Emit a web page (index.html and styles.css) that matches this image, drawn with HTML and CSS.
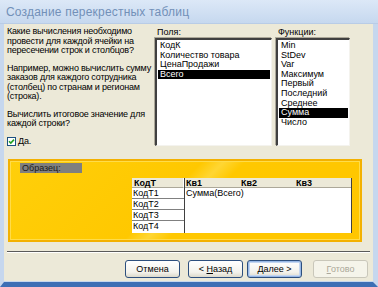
FILE: index.html
```html
<!DOCTYPE html>
<html lang="ru">
<head>
<meta charset="utf-8">
<title>Создание перекрестных таблиц</title>
<link rel="stylesheet" href="styles.css">
</head>
<body>
<div class="window">
  <div class="titlebar">Создание перекрестных таблиц</div>
  <div class="frame">
    <div class="top">
      <div class="intro">
        <p>Какие вычисления необходимо<br>провести для каждой ячейки на<br>пересечении строк и столбцов?</p>
        <p>Например, можно вычислить сумму<br>заказов для каждого сотрудника<br>(столбец) по странам и регионам<br>(строка).</p>
        <p>Вычислить итоговое значение для<br>каждой строки?</p>
        <label class="check">
          <span class="box"><svg width="9" height="9" viewBox="0 0 9 9"><path d="M2 4.2 L3.8 6 L7 2.6" fill="none" stroke="#21a121" stroke-width="1.6"/></svg></span>
          <span><u>Д</u>а.</span>
        </label>
      </div>
      <div class="col fields">
        <div class="lbl">Поля:</div>
        <ul class="list">
          <li>КодК</li>
          <li>Количество товара</li>
          <li>ЦенаПродажи</li>
          <li class="sel">Всего</li>
        </ul>
      </div>
      <div class="col funcs">
        <div class="lbl">Функции:</div>
        <ul class="list">
          <li>Min</li>
          <li>StDev</li>
          <li>Var</li>
          <li>Максимум</li>
          <li>Первый</li>
          <li>Последний</li>
          <li>Среднее</li>
          <li class="sel">Сумма</li>
          <li>Число</li>
        </ul>
      </div>
    </div>

    <div class="sample">
      <div class="sample-label">Образец:</div>
      <div class="grid">
        <div class="rowhead">
          <div class="hcell">КодТ</div>
          <div class="rcell">КодТ1</div>
          <div class="rcell">КодТ2</div>
          <div class="rcell">КодТ3</div>
          <div class="rcell">КодТ4</div>
        </div>
        <div class="data">
          <div class="hrow"><span>Кв1</span><span>Кв2</span><span>Кв3</span></div>
          <div class="val">Сумма(Всего)</div>
        </div>
      </div>
    </div>

    <div class="sep"></div>

    <div class="buttons">
      <button class="btn">Отмена</button>
      <button class="btn back">&lt; <u>Н</u>азад</button>
      <button class="btn next"><u>Д</u>алее &gt;</button>
      <button class="btn off"><u>Г</u>отово</button>
    </div>
  </div>
</div>
</body>
</html>
```
FILE: styles.css
```css
* { box-sizing: border-box; }
html, body { margin: 0; padding: 0; }
body {
  width: 378px;
  height: 287px;
  overflow: hidden;
  font-family: "Liberation Sans", Arial, sans-serif;
  font-size: 9px;
  color: #000;
  background: #ece9d8;
}
.window {
  width: 378px;
  height: 287px;
  display: flex;
  flex-direction: column;
}
.titlebar {
  height: 24px;
  flex: none;
  padding: 5px 0 0 6px;
  font-size: 12px;
  letter-spacing: 0.2px;
  color: #7290b8;
  background: linear-gradient(#dce8f7, #c6d8ef);
  border-bottom: 1px solid #b9cce6;
}
.frame {
  flex: 1;
  display: flex;
  flex-direction: column;
  background: #ece9d8;
  border-left: 4px solid #c6d7ee;
  border-right: 5px solid #c6d7ee;
  border-bottom: 5px solid #3d6fb5;
  box-shadow: inset 0 -1px 0 #c6d7ee;
  padding: 2px 0 0 3px;
}
.top {
  display: flex;
  height: 120px;
}
.intro {
  width: 148px;
  flex: none;
  line-height: 9.5px;
  letter-spacing: -0.2px;
}
.intro p { margin: 0 0 8px 0; white-space: nowrap; }
.intro p:first-child { margin-top: 1px; }
.check {
  display: flex;
  align-items: center;
  gap: 2px;
  margin-top: 1px;
}
.box {
  width: 9px;
  height: 9px;
  background: #fff;
  border: 1px solid #1c5180;
  display: flex;
}
.box svg { margin: -1px; }
.col { display: flex; flex-direction: column; }
.fields { width: 117px; }
.funcs { width: 74px; margin-left: 4px; }
.lbl { height: 12px; padding: 1px 0 0 2px; }
.list {
  list-style: none;
  margin: 0;
  padding: 1px 1px;
  flex: 1;
  background: #fff;
  border-top: 2px solid #404040;
  border-left: 2px solid #404040;
  border-right: 1px solid #f4f3ee;
  border-bottom: 1px solid #f4f3ee;
  box-shadow: -1px -1px 0 #aca899;
}
.list li {
  height: 9.6px;
  line-height: 9.6px;
  padding-left: 2px;
  white-space: nowrap;
}
.list li.sel { background: #000; color: #fff; }

.sample {
  margin: 13px 11px 0 1px;
  height: 83px;
  background: linear-gradient(135deg, #ffcf0a 0%, #ffc800 45%, #ffd633 50%, #ffc800 55%, #ffc600 100%);
  border: 2px solid #f3b100;
  box-shadow: inset 0 0 0 1px #ffdc4a;
  display: flex;
  flex-direction: column;
  padding: 2px 8px 0 10px;
}
.sample-label {
  width: 62px;
  height: 10px;
  line-height: 10px;
  background: #7f7f7f;
  color: #1a1a1a;
  padding-left: 2px;
}
.grid {
  display: flex;
  margin: 5px 0 0 112px;
  width: 220px;
  height: 55px;
  background: #fff;
}
.rowhead {
  width: 54px;
  display: flex;
  flex-direction: column;
  border-right: 1px solid #404040;
}
.hcell, .hrow {
  height: 10px;
  line-height: 10px;
  background: #ece9d8;
  font-weight: bold;
  border-bottom: 1px solid #aca899;
}
.hcell { padding-left: 2px; border-right: 1px solid #fff; }
.rcell {
  height: 11px;
  line-height: 11px;
  padding-left: 1px;
  border-bottom: 1px solid #808080;
}
.rcell:last-child { border-bottom: none; }
.data {
  flex: 1;
  display: flex;
  flex-direction: column;
  border-right: 1px solid #404040;
}
.hrow { display: flex; padding-left: 1px; }
.hrow span { width: 55px; }
.val { padding-left: 1px; line-height: 11px; }

.sep {
  margin: 9px 3px 0 0;
  height: 2px;
  border-top: 1px solid #5a5a5a;
  border-bottom: 1px solid #fff;
}
.buttons {
  display: flex;
  margin: 7px 0 0 118px;
}
.btn {
  font-family: inherit;
  font-size: 9px;
  width: 55px;
  height: 18px;
  padding: 0;
  border: 1px solid #2d4f7e;
  border-radius: 3px;
  background: linear-gradient(#ffffff, #f3f2ec 70%, #dcd9cb);
  color: #000;
}
.back { margin-left: 8px; }
.next { margin-left: 4px; box-shadow: inset 0 0 0 1px #98b8e6, inset 0 0 0 2px #c4d6f0; }
.off {
  margin-left: 11px;
  border-color: #c9c7ba;
  background: #f5f4ea;
  color: #aca899;
}
```
